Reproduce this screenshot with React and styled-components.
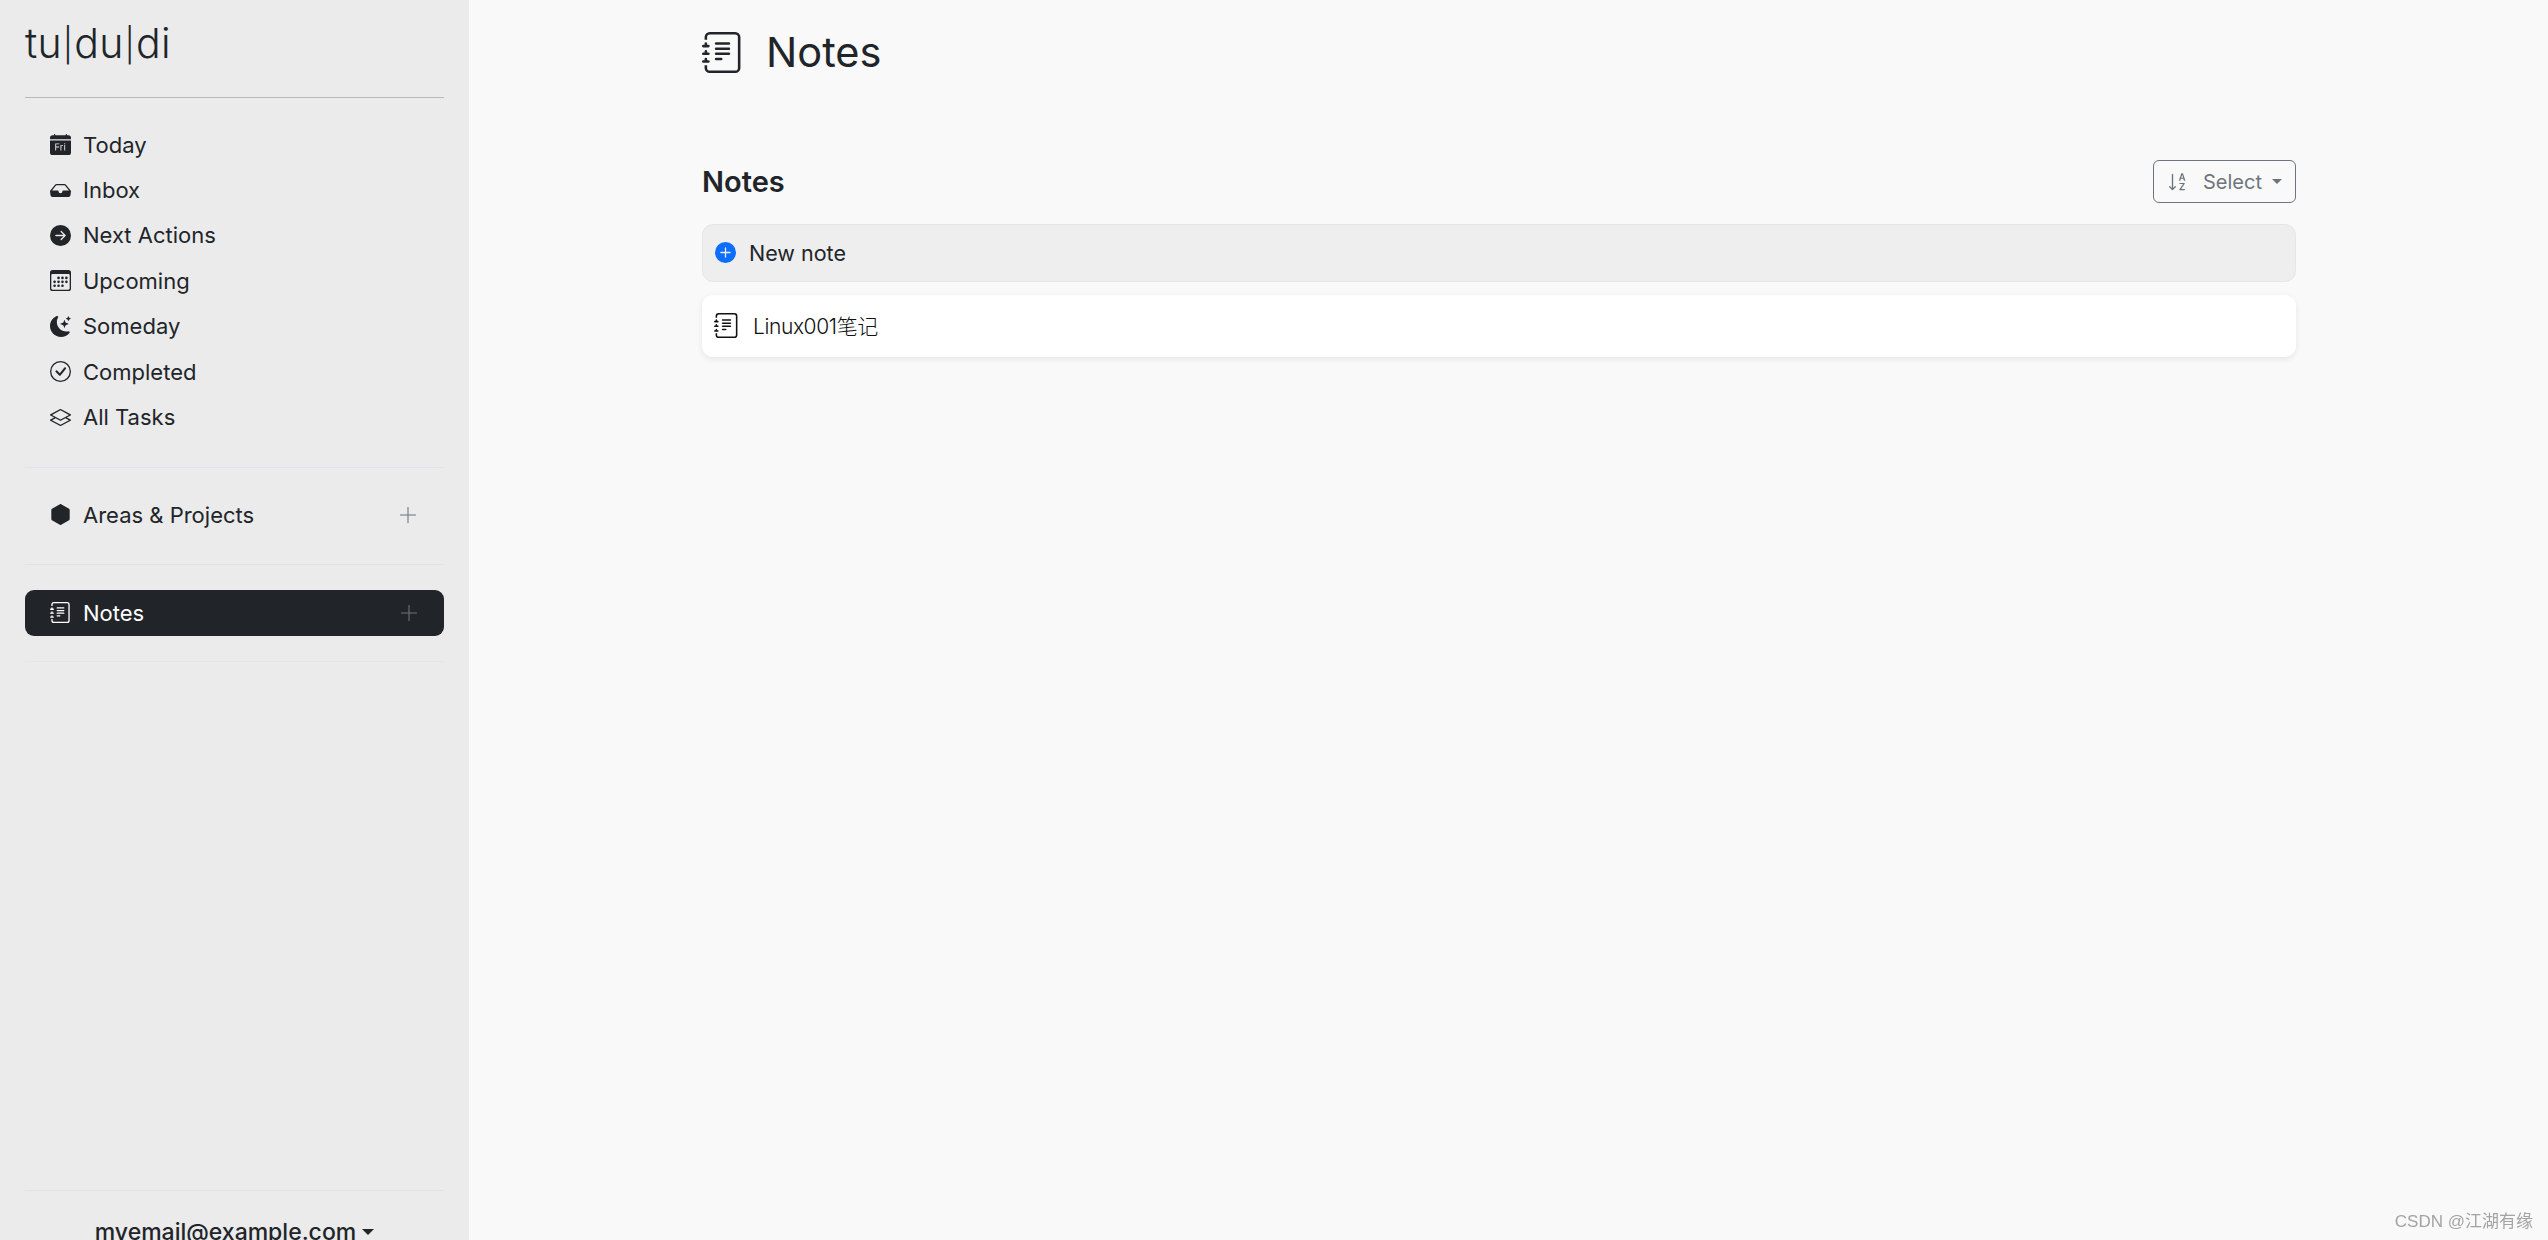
import React from 'react';
import styled, { createGlobalStyle } from 'styled-components';
import { Plus } from 'lucide-react';
import {
  BsArrowRightCircleFill,
  BsCalendar3,
  BsCalendarDayFill,
  BsCheckCircle,
  BsHexagonFill,
  BsInboxFill,
  BsJournalText,
  BsLayers,
  BsMoonStarsFill,
  BsPlusCircleFill,
  BsSortAlphaDown,
} from 'react-icons/bs';

const FONT = '"Inter", "Noto Sans CJK SC", sans-serif';
const DARK = '#212529';

const GlobalStyle = createGlobalStyle`
  html, body {
    margin: 0;
    height: 100%;
    overflow: hidden;
    background: #f9f9f9;
    font-family: ${FONT};
    color: ${DARK};
  }
  #root {
    height: 100%;
  }
`;

const Page = styled.div`
  display: flex;
  height: 1240px;
  overflow: hidden;
`;

const Sidebar = styled.aside`
  display: flex;
  flex-direction: column;
  width: 469px;
  flex-shrink: 0;
  padding: 0 25px;
  box-sizing: border-box;
  background: #ebebeb;
  overflow: hidden;
`;

const Logo = styled.div`
  height: 98px;
  box-sizing: border-box;
  padding-top: 18px;
  border-bottom: 1px solid #b9b9b9;
  font-size: 41px;
  line-height: 50px;
  font-weight: 300;
  letter-spacing: 0.2px;
`;

const LogoBar = styled.span`
  font-size: 33px;
  position: relative;
  top: -1px;
  margin: 0 1px;
`;

const NavList = styled.ul`
  list-style: none;
  margin: 0;
  padding: 24px 0 27px;
  border-bottom: 1px solid #e4e4e8;
`;

const NavSection = styled.div`
  padding: ${({ $offset }) => ($offset ? '24px 0 26px' : '25px 0')};
  border-bottom: 1px solid ${({ $light }) => ($light ? '#e6e6e6' : '#e2e3e8')};
`;

const NavItem = styled.li`
  display: flex;
  align-items: center;
  gap: 12px;
  height: ${({ $tall }) => ($tall ? '46px' : '45.4px')};
  padding: 0 25px;
  list-style: none;
  border-radius: 9px;
  font-size: 22px;
  background: ${({ $active }) => ($active ? DARK : 'transparent')};
  color: ${({ $active }) => ($active ? '#fff' : DARK)};
`;

const NavIcon = styled.span`
  display: flex;
  justify-content: center;
  width: 21px;
  font-size: 21px;
  flex-shrink: 0;
`;

const NavLabel = styled.span`
  flex: 1;
`;

const AddIcon = styled(Plus)`
  color: #6c757d;
  flex-shrink: 0;
  margin-right: ${({ $shift }) => ($shift ? '-3px' : '-2px')};
`;

const SidebarFooter = styled.div`
  flex-shrink: 0;
  margin-top: auto;
  margin-bottom: -7px;
  border-top: 1px solid #e2e3e8;
  padding-top: 26px;
  display: flex;
  justify-content: center;
  align-items: center;
  gap: 6px;
  font-size: 23px;
  line-height: 30px;
  font-weight: 500;
`;

const Caret = styled.span`
  display: inline-block;
  flex-shrink: 0;
  border-top: ${({ $size }) => $size}px solid ${({ $color }) => $color || DARK};
  border-left: ${({ $size }) => $size}px solid transparent;
  border-right: ${({ $size }) => $size}px solid transparent;
  border-bottom: 0;
`;

const Main = styled.main`
  flex: 1;
  position: relative;
  padding-left: 233px;
`;

const Content = styled.div`
  width: 1594px;
`;

const PageHeader = styled.header`
  display: flex;
  align-items: center;
  gap: 23px;
  height: 104px;
  margin-bottom: 56px;
  font-size: 41.5px;
  font-weight: 400;
`;

const HeaderIcon = styled(BsJournalText)`
  font-size: 41px;
  flex-shrink: 0;
`;

const SectionHead = styled.div`
  display: flex;
  justify-content: space-between;
  align-items: center;
  height: 43px;
  margin-bottom: 21px;
`;

const SectionTitle = styled.h2`
  margin: 0 0 1px;
  font-size: 29px;
  font-weight: 600;
`;

const SelectButton = styled.button`
  display: flex;
  align-items: center;
  width: 143px;
  height: 43px;
  box-sizing: border-box;
  padding: 0 13px;
  border: 1px solid #6c757d;
  border-radius: 6px;
  background: transparent;
  color: #6c757d;
  font-family: ${FONT};
  font-size: 20px;
`;

const SortIcon = styled(BsSortAlphaDown)`
  font-size: 22px;
  flex-shrink: 0;
`;

const SelectLabel = styled.span`
  margin: 0 10px 0 14px;
`;

const NewNoteRow = styled.div`
  display: flex;
  align-items: center;
  gap: 13px;
  height: 58px;
  box-sizing: border-box;
  padding: 0 12px 1px;
  margin-bottom: 13px;
  background: #eeeeee;
  border: 1px solid #e6e6e6;
  border-radius: 11px;
  font-size: 21.5px;
`;

const PlusCircle = styled(BsPlusCircleFill)`
  font-size: 21px;
  color: #0d6efd;
`;

const NoteCard = styled.div`
  display: flex;
  align-items: center;
  gap: 14px;
  height: 62px;
  box-sizing: border-box;
  padding: 0 12px 2px;
  background: #fff;
  border-radius: 11px;
  box-shadow: 0 2px 6px rgba(0, 0, 0, 0.08);
  font-size: 21px;
  font-weight: 300;
  letter-spacing: -0.4px;
  color: #111;
`;

const NoteIcon = styled(BsJournalText)`
  font-size: 25px;
  flex-shrink: 0;
`;

const Watermark = styled.div`
  position: absolute;
  right: 15px;
  bottom: 8px;
  font-family: "Liberation Sans", "Noto Sans CJK SC", sans-serif;
  font-size: 17px;
  color: #a3a3a3;
  filter: blur(0.4px);
`;

const NAV_ITEMS = [
  { label: 'Today', Icon: BsCalendarDayFill },
  { label: 'Inbox', Icon: BsInboxFill },
  { label: 'Next Actions', Icon: BsArrowRightCircleFill },
  { label: 'Upcoming', Icon: BsCalendar3 },
  { label: 'Someday', Icon: BsMoonStarsFill },
  { label: 'Completed', Icon: BsCheckCircle },
  { label: 'All Tasks', Icon: BsLayers },
];

const App = () => (
  <Page>
    <GlobalStyle />
    <Sidebar>
      <Logo>
        tu<LogoBar>|</LogoBar>du<LogoBar>|</LogoBar>di
      </Logo>
      <NavList>
        {NAV_ITEMS.map(({ label, Icon }) => (
          <NavItem key={label}>
            <NavIcon>
              <Icon />
            </NavIcon>
            <NavLabel>{label}</NavLabel>
          </NavItem>
        ))}
      </NavList>
      <NavSection $offset>
        <NavItem as="div" $tall>
          <NavIcon>
            <BsHexagonFill />
          </NavIcon>
          <NavLabel>Areas &amp; Projects</NavLabel>
          <AddIcon size={26} strokeWidth={1} />
        </NavItem>
      </NavSection>
      <NavSection $light>
        <NavItem as="div" $tall $active>
          <NavIcon>
            <BsJournalText />
          </NavIcon>
          <NavLabel>Notes</NavLabel>
          <AddIcon $shift size={26} strokeWidth={1} />
        </NavItem>
      </NavSection>
      <SidebarFooter>
        myemail@example.com
        <Caret $size={6} />
      </SidebarFooter>
    </Sidebar>
    <Main>
      <Content>
        <PageHeader>
          <HeaderIcon />
          Notes
        </PageHeader>
        <SectionHead>
          <SectionTitle>Notes</SectionTitle>
          <SelectButton>
            <SortIcon />
            <SelectLabel>Select</SelectLabel>
            <Caret $size={5} $color="#6c757d" />
          </SelectButton>
        </SectionHead>
        <NewNoteRow>
          <PlusCircle />
          New note
        </NewNoteRow>
        <NoteCard>
          <NoteIcon />
          Linux001笔记
        </NoteCard>
      </Content>
      <Watermark>CSDN @江湖有缘</Watermark>
    </Main>
  </Page>
);

export default App;
